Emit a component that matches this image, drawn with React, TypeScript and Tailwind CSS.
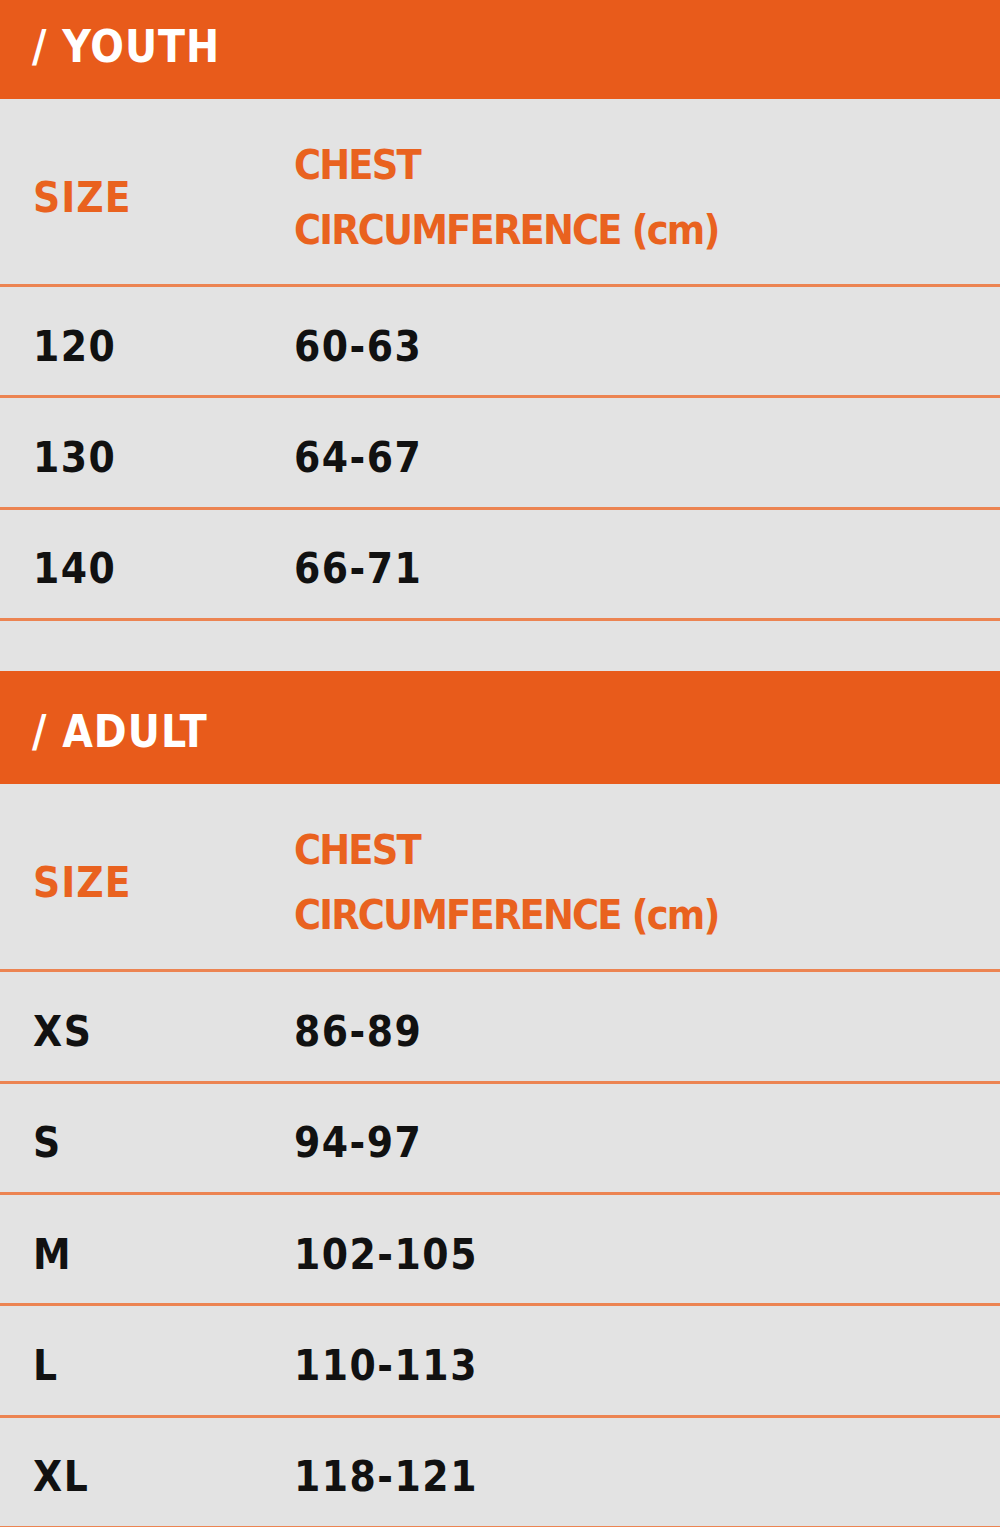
import React from 'react';

const YOUTH: [string, string][] = [
  ['120', '60-63'],
  ['130', '64-67'],
  ['140', '66-71'],
];

const ADULT: [string, string][] = [
  ['XS', '86-89'],
  ['S', '94-97'],
  ['M', '102-105'],
  ['L', '110-113'],
  ['XL', '118-121'],
];

function SectionTitle({ label, tall }: { label: string; tall?: boolean }) {
  return (
    <div
      className={[
        'bg-[#e85b1b] text-white flex items-end pl-[32px] pb-[30px] text-[44px] leading-none font-bold tracking-[1px]',
        tall ? 'h-[113px]' : 'h-[99px]',
      ].join(' ')}
    >
      <span>/ {label}</span>
    </div>
  );
}

function SizeTable({ rows }: { rows: [string, string][] }) {
  return (
    <div>
      <div className="h-[188px] border-b-[3px] border-[#ec8452] flex items-center pt-[12px] text-[#e9621f] font-bold">
        <div className="w-[294px] pl-[33px] leading-none text-[42px] tracking-[1px]">SIZE</div>
        <div className="leading-[65px] text-[41px] tracking-[-1.8px]">
          <div>CHEST</div>
          <div>CIRCUMFERENCE (cm)</div>
        </div>
      </div>
      {rows.map(([size, chest]) => (
        <div
          key={size}
          className="h-[111.4px] border-b-[3px] border-[#ec8452] flex items-center pt-[11px] text-[#111] text-[42px] font-bold leading-none tracking-[1.5px]"
        >
          <div className="w-[294px] pl-[33px]">{size}</div>
          <div>{chest}</div>
        </div>
      ))}
    </div>
  );
}

export default function App() {
  return (
    <div
      className="w-[1000px] h-[1527px] bg-[#e3e3e3] overflow-hidden"
      style={{ fontFamily: '"DejaVu Sans Condensed", "DejaVu Sans", sans-serif' }}
    >
      <SectionTitle label="YOUTH" />
      <SizeTable rows={YOUTH} />
      <div className="h-[50px]" />
      <SectionTitle label="ADULT" tall />
      <SizeTable rows={ADULT} />
    </div>
  );
}
